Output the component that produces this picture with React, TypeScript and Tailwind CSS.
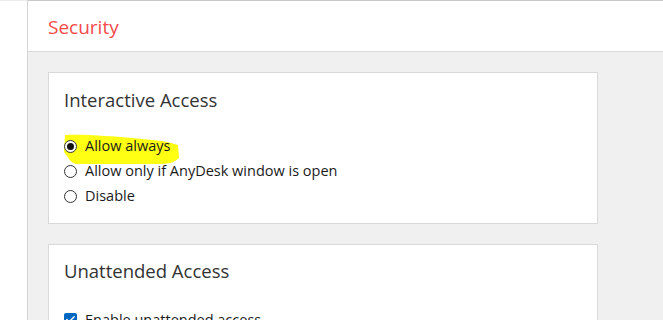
import { Check } from "lucide-react";

const font = { fontFamily: '"Open Sans", "Noto Sans", sans-serif' };

function Radio({ label, checked }: { label: string; checked?: boolean }) {
  return (
    <div className="flex h-[25px] items-center">
      <span className="flex h-[13px] w-[13px] items-center justify-center rounded-full border border-[#333333] bg-white">
        {checked && <span className="h-[7px] w-[7px] rounded-full bg-[#111111]" />}
      </span>
      <span className="ml-[8px] text-[14.5px] text-[#1b1b1b]">{label}</span>
    </div>
  );
}

function Highlight() {
  // yellow marker stroke over the first option
  return (
    <svg className="pointer-events-none absolute left-[13px] top-[60px]" width="120" height="32" viewBox="0 0 120 32">
      <path
        d="M3 2 C20 1 50 3 80 6 C95 7 108 9 116 12 L117 25 C114 28 108 31 100 31 L14 31 C10 30 7 27 5 23 L2 19 Z"
        fill="#ffff14"
      />
    </svg>
  );
}

export default function App() {
  return (
    <div className="flex h-[320px] w-[663px] overflow-hidden bg-white" style={font}>
      <div className="w-[28px] shrink-0 border-r border-[#d4d4d4] border-t border-t-[#ececec] bg-white" />
      <div className="flex flex-1 flex-col border-t border-[#c9c9c9]">
        <header className="flex h-[51px] shrink-0 items-center border-b border-[#dadada] bg-white pl-[20px] pt-[3px]">
          <h1 className="text-[19px] text-[#f44a4a]">Security</h1>
        </header>
        <main className="flex flex-1 flex-col gap-[20px] bg-[#f0f0f0] pl-[20px] pt-[20px]">
          <section className="relative h-[152px] w-[550px] shrink-0 border border-[#d9d9d9] bg-white px-[15px]">
            <h2 className="mt-[13px] text-[18.5px] text-[#333333]">Interactive Access</h2>
            <Highlight />
            <div className="relative mt-[20px] flex flex-col">
              <Radio label="Allow always" checked />
              <Radio label="Allow only if AnyDesk window is open" />
              <Radio label="Disable" />
            </div>
          </section>
          <section className="w-[550px] flex-1 border border-[#d9d9d9] bg-white px-[15px]">
            <h2 className="mt-[12px] text-[18.5px] text-[#333333]">Unattended Access</h2>
            <div className="mt-[24px] flex items-center">
              <span className="flex h-[13px] w-[13px] items-center justify-center rounded-[2px] bg-[#0067c0]">
                <Check className="h-[11px] w-[11px] text-white" strokeWidth={3} />
              </span>
              <span className="ml-[8px] text-[14.5px] text-[#1b1b1b]">Enable unattended access</span>
            </div>
          </section>
        </main>
      </div>
    </div>
  );
}
